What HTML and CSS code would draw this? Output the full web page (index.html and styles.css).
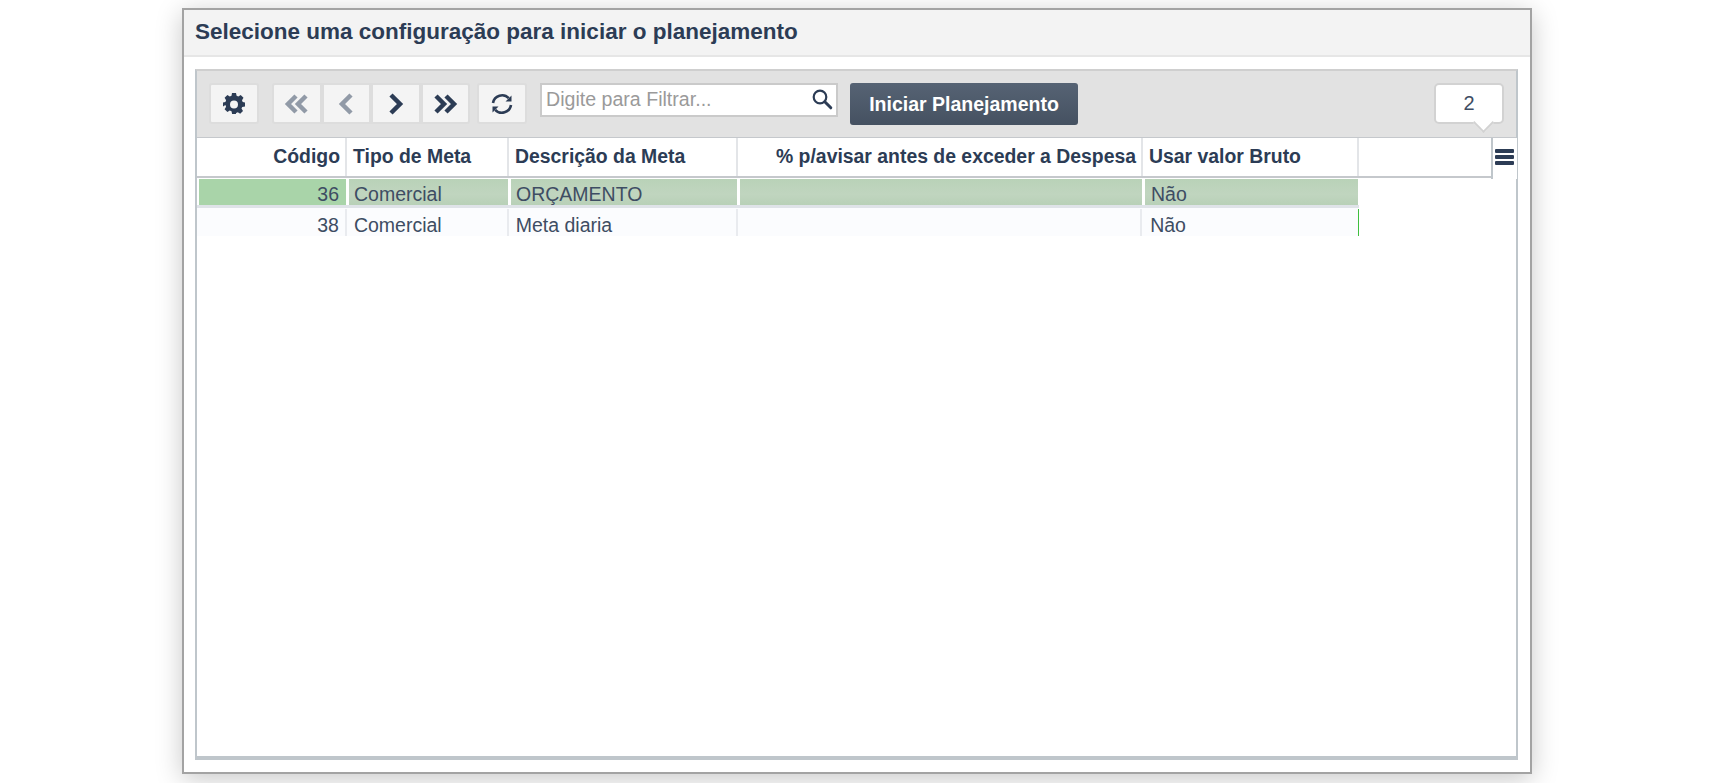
FILE: index.html
```html
<!DOCTYPE html>
<html lang="pt">
<head>
<meta charset="utf-8">
<title>Planejamento</title>
<link rel="stylesheet" href="styles.css">
</head>
<body>
<div class="modal">
  <div class="modal-title">Selecione uma configuração para iniciar o planejamento</div>
  <div class="modal-body">
    <div class="grid">
      <div class="toolbar">
        <button class="btn tool"><svg width="22" height="22" viewBox="0 0 22 22"><path fill="#2c3c55" fill-rule="evenodd" d="M9 1h4l.6 2.800 1.700.7L17.700 3 20.500 5.800 19 8.200l.7 1.700 2.300.6v4l-2.800.4-.7 1.700 1.500 2.400-2.800 2.800-2.400-1.500-1.700.7L12.900 22H9.100l-.6-2.800-1.700-.7-2.400 1.500-2.800-2.800 1.500-2.400-.7-1.700L0 14.500v-4l2.400-.6.700-1.700L1.600 5.800 4.400 3 6.800 4.500l1.700-.7zM11 8.500a4 4 0 1 0 0 8 4 4 0 0 0 0-8z" transform="translate(0 -1)"/></svg></button>
        <div class="nav-group">
          <button class="btn nav"><svg width="26" height="22" viewBox="0 0 26 22"><path class="chev dim" d="M12 3 4 11l8 8M22 3l-8 8 8 8"/></svg></button>
          <button class="btn nav"><svg width="18" height="24" viewBox="0 0 18 24"><path class="chev dim" d="M14 3 5 12l9 9"/></svg></button>
          <button class="btn nav"><svg width="18" height="24" viewBox="0 0 18 24"><path class="chev" d="m4 3 9 9-9 9"/></svg></button>
          <button class="btn nav"><svg width="26" height="22" viewBox="0 0 26 22"><path class="chev" d="m4 3 8 8-8 8M14 3l8 8-8 8"/></svg></button>
        </div>
        <button class="btn tool"><svg width="24" height="24" viewBox="0 0 24 24"><path class="sync" d="M3 11A9.200 9.200 0 0 1 18.800 6.200"/><path class="sync" d="M21 13A9.200 9.200 0 0 1 5.200 17.800"/><path fill="#2c3c55" d="M21.500 3.500V9.500H15.500zM2.500 20.500V14.500H8.500z"/></svg></button>
        <div class="filter">
          <span class="placeholder">Digite para Filtrar...</span>
          <svg width="22" height="22" viewBox="0 0 22 22"><circle cx="9" cy="9" r="6.300" fill="none" stroke="#2c3c55" stroke-width="2.200"/><path d="m13.800 13.800 6 6" stroke="#2c3c55" stroke-width="3" stroke-linecap="round"/></svg>
        </div>
        <button class="primary">Iniciar Planejamento</button>
        <div class="count">2</div>
      </div>
      <div class="table-wrap">
        <div class="table-head">
          <div class="head-row">
            <div class="hcell c1 right">Código</div>
            <div class="hcell c2">Tipo de Meta</div>
            <div class="hcell c3">Descrição da Meta</div>
            <div class="hcell c4 right">% p/avisar antes de exceder a Despesa</div>
            <div class="hcell c5">Usar valor Bruto</div>
            <div class="hcell c6"></div>
          </div>
          <div class="menu"><span></span><span></span><span></span></div>
        </div>
        <div class="row selected">
          <div class="cell c1 right first"><span>36</span></div>
          <div class="cell c2"><span>Comercial</span></div>
          <div class="cell c3"><span>ORÇAMENTO</span></div>
          <div class="cell c4"></div>
          <div class="cell c5"><span>Não</span></div>
        </div>
        <div class="row plain">
          <div class="cell c1 right"><span>38</span></div>
          <div class="cell c2"><span>Comercial</span></div>
          <div class="cell c3"><span>Meta diaria</span></div>
          <div class="cell c4"></div>
          <div class="cell c5"><span>Não</span></div>
        </div>
      </div>
    </div>
  </div>
</div>
</body>
</html>
```

FILE: styles.css
```css
* { box-sizing: border-box; }
html, body { margin: 0; height: 783px; overflow: hidden; background: #fff; }
body { font-family: "Liberation Sans", Arial, sans-serif; color: #2c3c55; padding-top: 8px; }
.modal {
  width: 1350px; height: 766px; margin-left: 182px;
  border: 2px solid #a3a3a3; background: #fff;
  box-shadow: 0 5px 25px rgba(0,0,0,.22);
  display: flex; flex-direction: column;
}
.modal-title {
  height: 47px; background: #f3f3f3; border-bottom: 2px solid #e6e6e6;
  padding: 0 11px; font-size: 22.500px; font-weight: bold; line-height: 44px; flex: none;
}
.modal-body { flex: 1; padding: 12px 12px 12px 11px; display: flex; min-height: 0; }
.grid { flex: 1; border: 2px solid #bfc6cb; border-top-color: #cfcfcf; border-bottom-width: 4px; display: flex; flex-direction: column; }
.toolbar {
  height: 67px; background: #e2e2e2; border-bottom: 1px solid #c5c8cc; flex: none;
  display: flex; align-items: flex-start; padding: 12px 12px 0 12px;
}
.btn {
  background: #f4f4f4; border: 2px solid #dddddd; border-radius: 3px; padding: 0; height: 41px;
  display: flex; align-items: center; justify-content: center; font: inherit;
}
.tool { width: 50px; margin-right: 13px; }
.nav-group { display: flex; margin-right: 7px; }
.nav-group .btn { width: 49.500px; border-radius: 0; }
.nav-group .btn:first-child { border-radius: 3px 0 0 3px; }
.nav-group .btn:last-child { border-radius: 0 3px 3px 0; }
.chev { fill: none; stroke: #2c3c55; stroke-width: 4.500; }
.chev.dim { stroke: #919aa7; }
.sync { fill: none; stroke: #2c3c55; stroke-width: 2.600; }
.filter {
  width: 298px; height: 34px; background: #fff; border: 2px solid #cacaca; margin-right: 12px;
  display: flex; align-items: center; justify-content: space-between; padding: 0 3px 0 4px;
}
.placeholder { font-size: 19.600px; color: #9a9a9a; line-height: 26px; margin-top: -3px; }
.filter svg { margin-top: -3px; }
.primary {
  width: 228px; height: 42px; border: 0; border-radius: 3px; color: #fff; font: bold 19.500px "Liberation Sans", Arial, sans-serif;
  background: linear-gradient(#566374, #455161); padding: 0;
}
.count {
  position: relative; margin-left: auto; width: 70px; height: 41px; background: #fff; border: 2px solid #d2d2d2; border-radius: 5px;
  text-align: center; font-size: 20px; line-height: 36px; color: #3e4d63;
}
.count::after {
  content: ""; position: absolute; right: 11px; bottom: -8px; width: 13px; height: 13px; background: #fff;
  border-right: 2px solid #d2d2d2; border-bottom: 2px solid #d2d2d2; transform: rotate(45deg);
}
.table-wrap { flex: 1; background: #fff; }
.table-head { display: flex; height: 40px; align-items: stretch; }
.head-row { display: flex; width: 1294px; height: 40px; border-bottom: 2px solid #c5c8cc; }
.hcell { font-size: 19.400px; font-weight: bold; line-height: 37px; padding: 0 5px 0 6px; border-right: 2px solid #e3e5e8; white-space: nowrap; height: 38px; }
.right { text-align: right; }
.c1 { width: 150px; }
.c2 { width: 162px; }
.c3 { width: 229px; }
.c4 { width: 405px; }
.c5 { width: 216px; }
.hcell.c6 { flex: 1; border-right: 0; }
.menu { position: relative; flex: 1; margin-right: -1px; background: #fff; border-left: 2px solid #bfc6cb; height: 41px; display: flex; flex-direction: column; gap: 2px; padding: 11px 0 0 2px; }
.menu span { display: block; width: 19px; height: 4px; background: #2c3c55; border-radius: 1px; }
.row { display: flex; width: 1162px; font-size: 19.500px; color: #3e4d63; }
.cell { white-space: nowrap; height: 26px; line-height: 31px; padding: 0 6px; }
.selected { height: 26px; margin-top: 1px; }
.selected .cell { background: linear-gradient(#b9d2b8, #c0d5bf 60%, #b8d0b7); margin: 0 1px 0 2px; padding: 0 6px 0 5px; }
.selected .cell.first { background: #a9d4a9; padding: 0 7px 0 0; }
.selected .c1 { width: 147px; }
.selected .c2 { width: 159px; }
.selected .c3 { width: 226px; }
.selected .c4 { width: 402px; }
.selected .c5 { width: 213px; padding-left: 6px; }
.plain { height: 31px; border-top: 3px solid #dfe3e8; background: #fbfcfe; }
.plain .cell { border-right: 2px solid #e9ebef; height: 27px; margin-top: 1px; line-height: 33px; padding-left: 7px; }
.plain .c5 { width: 217px; border-right: 1px solid #3fbf3f; padding-left: 8px; }
```
